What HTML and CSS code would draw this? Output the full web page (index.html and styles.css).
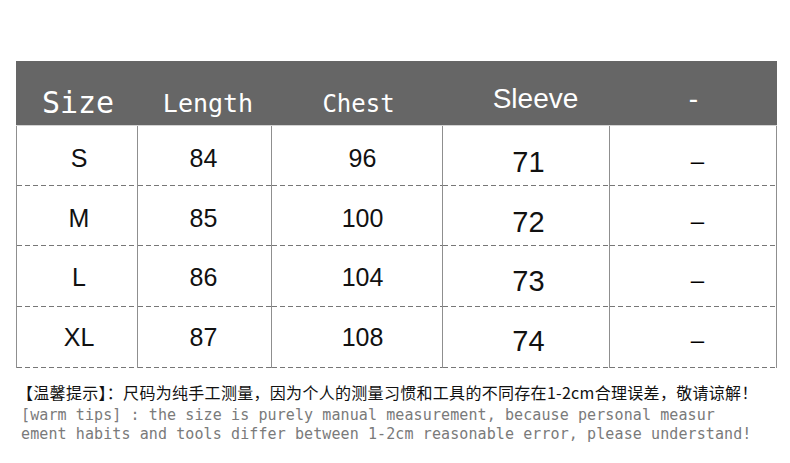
FILE: index.html
```html
<!DOCTYPE html>
<html lang="zh">
<head>
<meta charset="utf-8">
<title>Size chart</title>
<link rel="stylesheet" href="styles.css">
</head>
<body>
<div class="chart">
  <div class="head">
    <div class="hc h-size">Size</div>
    <div class="hc h-length">Length</div>
    <div class="hc h-chest">Chest</div>
    <div class="hc h-sleeve">Sleeve</div>
    <div class="hc h-extra">-</div>
  </div>
  <div class="row r1">
    <div class="c c1">S</div><div class="c c2">84</div><div class="c c3">96</div><div class="c c4">71</div><div class="c c5">–</div>
  </div>
  <div class="row r2">
    <div class="c c1">M</div><div class="c c2">85</div><div class="c c3">100</div><div class="c c4">72</div><div class="c c5">–</div>
  </div>
  <div class="row r3">
    <div class="c c1">L</div><div class="c c2">86</div><div class="c c3">104</div><div class="c c4">73</div><div class="c c5">–</div>
  </div>
  <div class="row r4">
    <div class="c c1">XL</div><div class="c c2">87</div><div class="c c3">108</div><div class="c c4">74</div><div class="c c5">–</div>
  </div>
</div>
<div class="notes">
  <p class="cn">【温馨提示】：尺码为纯手工测量，因为个人的测量习惯和工具的不同存在1-2cm合理误差，敬请谅解！</p>
  <p class="en en-first">[warm tips] : the size is purely manual measurement, because personal measur</p>
  <p class="en">ement habits and tools differ between 1-2cm reasonable error, please understand!</p>
</div>
</body>
</html>
```

FILE: styles.css
```css
* { box-sizing: border-box; }
html, body { margin: 0; padding: 0; background: #fff; }
body { width: 790px; height: 463px; overflow: hidden; }

.chart {
  margin: 61px 0 0 16px;
  width: 761px;
}

.head, .row {
  display: grid;
  grid-template-columns: 122px 134px 171px 167px 167px;
}

.head {
  height: 65px;
  background: #666666;
  border-bottom: 1px solid #d4d4d4;
  color: #ffffff;
}

.hc {
  text-align: center;
  line-height: 1;
  white-space: nowrap;
}
.h-size { font: 30px "DejaVu Sans Mono", monospace; padding-top: 24px; padding-left: 2px; }
.h-length { font: 25px "DejaVu Sans Mono", monospace; padding-top: 28px; padding-left: 6px; }
.h-chest { font: 24px "DejaVu Sans Mono", monospace; padding-top: 29px; padding-left: 2px; }
.h-sleeve { font: 28px "Liberation Sans", Arial, sans-serif; padding-top: 22px; padding-left: 18px; }
.h-extra { font: 28px "Liberation Sans", Arial, sans-serif; padding-top: 22px; }

.row { height: 60px; }
.row.r3, .row.r4 { height: 61px; }

.c {
  font-family: "Liberation Sans", Arial, sans-serif;
  font-size: 25px;
  line-height: 1;
  color: #111;
  text-align: center;
  padding-top: 20px;
  border-right: 1px solid #8f8f8f;
  background: repeating-linear-gradient(90deg, #777 0 5px, transparent 5px 8px) left bottom / 100% 1px no-repeat;
}
.c1 { border-left: 1px solid #8f8f8f; padding-left: 4px; }
.c2 { padding-right: 2px; }
.c3 { padding-left: 11px; }
.c4 { font-size: 29px; padding-top: 22px; padding-left: 5px; }
.c5 { font-size: 24px; padding-top: 23px; padding-left: 9px; color: #000; }

.r3 .c { padding-top: 19px; }
.r3 .c4 { padding-top: 21px; }
.r3 .c5 { padding-top: 22px; }
.r4 .c { padding-top: 18px; }
.r4 .c4 { padding-top: 20px; }
.r4 .c5 { padding-top: 21px; }

.notes {
  margin-top: 14px;
}
.notes p { margin: 0; white-space: nowrap; }
.cn {
  font-family: "Noto Sans CJK SC", sans-serif;
  font-size: 16px;
  line-height: 20px;
  color: #111;
  padding-left: 17px;
  letter-spacing: 0.3px;
}
.en {
  font-family: "DejaVu Sans Mono", monospace;
  font-size: 15px;
  line-height: 19px;
  color: #7a7a7a;
  padding-left: 21px;
  letter-spacing: 0.1px;
}
.notes .en-first { margin-top: 4px; }
```
